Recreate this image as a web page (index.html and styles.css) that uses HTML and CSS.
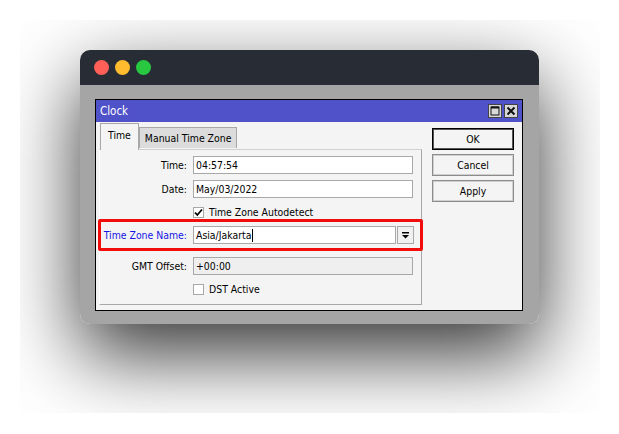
FILE: index.html
```html
<!DOCTYPE html>
<html>
<head>
<meta charset="utf-8">
<link rel="stylesheet" href="styles.css">
</head>
<body>
<div class="frame">
  <div class="window">
    <div class="mac-bar">
      <span class="dot red"></span><span class="dot yellow"></span><span class="dot green"></span>
    </div>
    <div class="desk">
      <div class="dialog">
        <div class="dlg-title">
          <span class="dlg-name">Clock</span>
          <div class="tbtns">
            <span class="tbtn"><svg width="10" height="10" viewBox="0 0 10 10"><rect x="1" y="1" width="8" height="8" fill="none" stroke="#111" stroke-width="1"/><line x1="1" y1="1.5" x2="9" y2="1.5" stroke="#111" stroke-width="2"/></svg></span>
            <span class="tbtn"><svg width="10" height="10" viewBox="0 0 10 10"><path d="M1.5 1.5 L8.5 8.5 M8.5 1.5 L1.5 8.5" stroke="#111" stroke-width="2"/></svg></span>
          </div>
        </div>
        <div class="dlg-body">
          <div class="tabs-area">
            <div class="tabs">
              <div class="tab active">Time</div>
              <div class="tab">Manual Time Zone</div>
            </div>
            <div class="panel">
              <div class="row">
                <label class="lbl">Time:</label>
                <div class="input">04:57:54</div>
              </div>
              <div class="row">
                <label class="lbl">Date:</label>
                <div class="input">May/03/2022</div>
              </div>
              <div class="row tight">
                <span></span>
                <div class="check"><span class="box"><svg width="9" height="9" viewBox="0 0 9 9"><path d="M1 4.5 L3.3 7 L8 1.5" fill="none" stroke="#000" stroke-width="1.8"/></svg></span>Time Zone Autodetect</div>
              </div>
              <div class="row tight tz">
                <label class="lbl blue">Time Zone Name:</label>
                <div class="combo">
                  <div class="input grow">Asia/Jakarta<span class="caret"></span></div>
                  <span class="drop"><svg width="9" height="9" viewBox="0 0 9 9"><rect x="1" y="1" width="7" height="1.5" fill="#000"/><path d="M1 4 H8 L4.5 7.5 Z" fill="#000"/></svg></span>
                </div>
                <span class="highlight"></span>
              </div>
              <div class="row far">
                <label class="lbl">GMT Offset:</label>
                <div class="input ro">+00:00</div>
              </div>
              <div class="row tight">
                <span></span>
                <div class="check"><span class="box"></span>DST Active</div>
              </div>
            </div>
          </div>
          <div class="btns">
            <div class="btn default">OK</div>
            <div class="btn">Cancel</div>
            <div class="btn">Apply</div>
          </div>
        </div>
      </div>
    </div>
  </div>
</div>
</body>
</html>
```

FILE: styles.css
```css
* { box-sizing: border-box; }
html, body { margin: 0; padding: 0; background: #fff; }
body { width: 619px; height: 434px; overflow: hidden; }

.frame {
  margin: 20px 0 0 20px;
  width: 580px;
  height: 393px;
  overflow: hidden;
  padding: 30px 0 0 60px;
}

.window {
  width: 459px;
  height: 274px;
  border-radius: 10px;
  overflow: hidden;
  box-shadow: 0 30px 80px rgba(0,0,0,0.8);
  display: flex;
  flex-direction: column;
}

.mac-bar {
  height: 35px;
  background: #282c35;
  display: flex;
  align-items: center;
  gap: 6px;
  padding-left: 14px;
}
.dot { width: 15px; height: 15px; border-radius: 50%; display: block; }
.red { background: #ff5f57; }
.yellow { background: #febc2e; }
.green { background: #28c840; }

.desk {
  flex: 1;
  background: #a5a5a5;
  padding: 14px 16px 13px 15px;
}

.dialog {
  height: 212px;
  border: 1px solid #000;
  background: #f4f4f4;
  display: flex;
  flex-direction: column;
  font-family: "DejaVu Sans Condensed", "DejaVu Sans", sans-serif;
  font-size: 10.4px;
  color: #000;
}

.dlg-title {
  height: 22px;
  background: #4f52c9;
  display: flex;
  align-items: center;
  justify-content: space-between;
  padding: 0 4px 0 4px;
  color: #fff;
  font-size: 11.5px;
}
.tbtns { display: flex; gap: 2px; }
.tbtn {
  width: 14px;
  height: 14px;
  background: #d8d8d8;
  border: 1px solid #444;
  display: flex;
  align-items: center;
  justify-content: center;
}

.dlg-body {
  flex: 1;
  display: flex;
  padding: 1px 8px 0 3px;
}

.tabs-area { width: 323px; display: flex; flex-direction: column; }
.tabs { display: flex; align-items: flex-start; padding-left: 1px; height: 27px; }
.tab {
  height: 21px;
  margin-top: 4px;
  padding: 0 5px;
  background: #dcdcdc;
  border: 1px solid #a8a8a8;
  border-bottom: none;
  display: flex;
  align-items: center;
}
.tab.active {
  height: 27px;
  margin-top: 0;
  background: #f4f4f4;
  padding: 0 7px 5px 7px;
  position: relative;
  z-index: 1;
}

.panel {
  margin-top: -1px;
  height: 156px;
  border: 1px solid #a8a8a8;
  border-left-color: #fff;
  border-top-color: #d0d0d0;
  padding-top: 6px;
  display: flex;
  flex-direction: column;
  gap: 6px;
}

.row {
  display: grid;
  grid-template-columns: 87px 221px;
  column-gap: 6px;
  height: 18px;
  align-items: center;
  position: relative;
}
.row.tight { margin-top: -1px; }
.row.far { margin-top: 7px; }

.lbl { text-align: right; }
.lbl.blue { color: #1414e6; }

.input {
  height: 18px;
  width: 220px;
  background: #fff;
  border: 1px solid #a8a8a8;
  padding: 0 2px;
  display: flex;
  align-items: center;
}
.input.ro { background: #efefef; }
.combo { display: flex; gap: 1px; }
.input.grow { width: 203px; }
.caret { display: inline-block; width: 1px; height: 13px; background: #000; margin-left: 1px; }
.drop {
  width: 17px;
  height: 18px;
  background: #f0f0f0;
  border: 1px solid #a8a8a8;
  display: flex;
  align-items: center;
  justify-content: center;
}

.check { display: flex; align-items: center; gap: 5px; }
.box {
  width: 11px;
  height: 11px;
  background: #fff;
  border: 1px solid #a8a8a8;
  display: flex;
  align-items: center;
  justify-content: center;
}

.highlight {
  position: absolute;
  left: -2px;
  top: -7px;
  width: 325px;
  height: 32px;
  border: 3px solid #f20c0c;
  border-radius: 2px;
  pointer-events: none;
}

.btns {
  margin-left: 10px;
  padding-top: 5px;
  display: flex;
  flex-direction: column;
  gap: 4px;
}
.btn {
  width: 82px;
  height: 22px;
  border: 1px solid #8c8c8c;
  box-shadow: inset 0 0 0 1px #cfcfcf;
  background: #f4f4f4;
  display: flex;
  align-items: center;
  justify-content: center;
}
.btn.default { border-color: #000; box-shadow: inset 0 0 0 1px #555; }
```
